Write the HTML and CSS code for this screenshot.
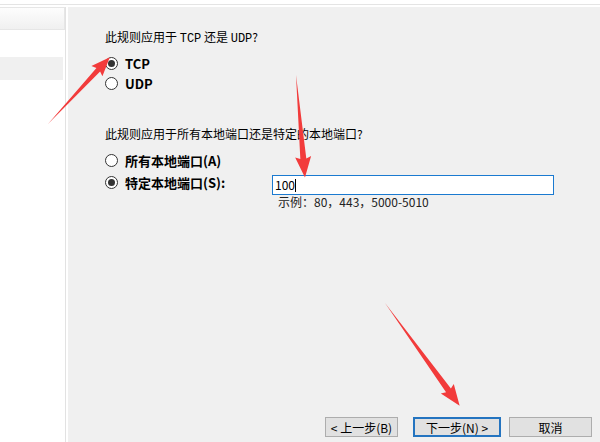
FILE: index.html
```html
<!DOCTYPE html>
<html lang="zh-CN">
<head>
    <meta charset="UTF-8">
    <title>新建入站规则向导</title>
    <link rel="stylesheet" href="styles.css">
</head>
<body>
    <div class="window">
        <div class="topbar"></div>
        <div class="content">
            <div class="sidebar">
                <div class="side-head"></div>
                <div class="side-row selected"></div>
            </div>
            <div class="main">
                <p class="question">此规则应用于 <span class="mono">TCP</span> 还是 <span class="mono">UDP</span>?</p>
                <div class="options">
                    <label class="option"><span class="radio checked"></span>TCP</label>
                    <label class="option"><span class="radio"></span>UDP</label>
                </div>

                <p class="question q2">此规则应用于所有本地端口还是特定的本地端口?</p>
                <div class="ports">
                    <label class="option"><span class="radio"></span>所有本地端口(A)</label>
                    <div class="port-row">
                        <label class="option port-label"><span class="radio checked"></span>特定本地端口(S):</label>
                        <div class="port-field">
                            <div class="input">100<span class="caret"></span></div>
                            <div class="hint">示例：80，443，5000-5010</div>
                        </div>
                    </div>
                </div>

                <div class="btn-bar">
                    <button type="button" class="btn">&lt; 上一步(B)</button>
                    <button type="button" class="btn default">下一步(N) &gt;</button>
                    <button type="button" class="btn cancel">取消</button>
                </div>
            </div>
        </div>

        <!-- annotation arrows -->
        <svg class="arrows" width="600" height="442" viewBox="0 0 600 442">
            <g transform="translate(48 124) rotate(-47.2)">
                <polygon points="0,0 74,-2.5 72,-7.5 91,0 72,7.5 74,2.5"/>
            </g>
            <g transform="translate(296 75) rotate(85)">
                <polygon points="0,0 84,-3 82,-8 103,0 82,8 84,3"/>
            </g>
            <g transform="translate(385 303) rotate(54)">
                <polygon points="0,0 108,-3 106,-8 127,0 106,8 108,3"/>
            </g>
        </svg>
    </div>
</body>
</html>
```

FILE: styles.css
```css
* { margin: 0; padding: 0; box-sizing: border-box; }
body {
    font-family: "Noto Sans CJK SC", "Noto Sans", sans-serif;
    font-size: 12px; color: #000; background: #fff;
}
.window {
    position: relative; width: 600px; height: 442px; overflow: hidden;
    display: flex; flex-direction: column;
}
.topbar { height: 5px; border-bottom: 1px solid #e4e4e4; }
.content { flex: 1; display: flex; padding-top: 2px; }

.sidebar {
    width: 66px; border-right: 1px solid #e2e2e2; background: #fff;
}
.side-head {
    height: 23px; border: 1px solid #e6e6e6; border-left: none;
    background: linear-gradient(#fdfdfd, #f0f0f0);
}
.side-row { height: 23px; margin-top: 27px; margin-right: 2px; }
.side-row.selected { background: #f0f0f0; }

.main {
    flex: 1; margin-left: 2px; background: #f0f0f0;
    padding: 22px 8px 5px 37px;
    display: flex; flex-direction: column;
}
.question { line-height: 16px; }
.question .mono { font-family: "Liberation Mono", monospace; font-size: 12px; }
.q2 { margin-top: 33px; }

.options { margin-top: 6px; }
.option {
    display: flex; align-items: center; height: 20px;
    font-weight: bold; font-size: 13px;
}
.radio {
    width: 13px; height: 13px; border: 1px solid #333; border-radius: 50%;
    background: #fff; margin-right: 7px; position: relative; flex-shrink: 0;
}
.radio.checked::after {
    content: ""; position: absolute; left: 2px; top: 2px;
    width: 7px; height: 7px; border-radius: 50%; background: #333;
}

.ports { margin-top: 7px; }
.ports .option { height: 22px; }
.port-row { display: flex; align-items: flex-start; }
.port-label { width: 167px; font-weight: bold; }
.port-field { margin-top: 4px; }
.input {
    width: 282px; height: 20px; background: #fff;
    border: 1px solid #1b7ad0; padding: 0 2px;
    font-size: 12px; line-height: 18px;
}
.caret {
    display: inline-block; width: 1px; height: 13px; background: #000;
    vertical-align: -2px;
}
.hint { margin-left: 6px; line-height: 13px; color: #222; }

.btn-bar {
    margin-top: auto; display: flex; justify-content: flex-end;
}
.btn {
    height: 20px; font-family: inherit; font-size: 12px; color: #000;
    background: #e1e1e1; border: 1px solid #adadad; padding: 0;
}
.btn:nth-child(1) { width: 73px; }
.btn.default {
    width: 88px; margin-left: 15px; border: 2px solid #2474c0;
}
.btn.cancel { width: 83px; margin-left: 8px; }

.arrows { position: absolute; left: 0; top: 0; pointer-events: none; }
.arrows polygon { fill: #f23b3b; }
```
